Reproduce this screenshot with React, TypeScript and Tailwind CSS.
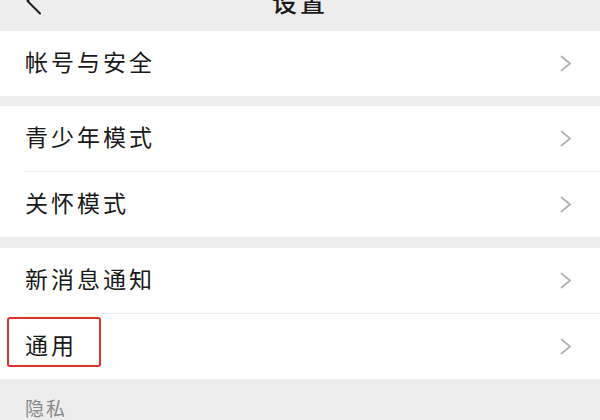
import React from 'react'

const font = { fontFamily: '"Noto Sans CJK SC", "Noto Sans", sans-serif' }

function Chevron() {
  return (
    <svg width="12" height="17" viewBox="0 0 12 17" className="shrink-0">
      <path d="M1.5 1.5 L10 8.5 L1.5 15.5" fill="none" stroke="#b2b2b2" strokeWidth="1.8" strokeLinecap="round" strokeLinejoin="round" />
    </svg>
  )
}

function Row({ label, tall, divider, boxed }: { label: string; tall?: boolean; divider?: boolean; boxed?: boolean }) {
  return (
    <div className={`relative flex items-center pl-[25px] pr-[28px] ${tall ? 'h-[66px]' : 'h-[65px]'}`}>
      {divider && <div className="absolute top-0 left-[24px] right-0 h-px bg-[#ececec]" />}
      {boxed && (
        <div className="absolute left-[7px] top-[4px] w-[94px] h-[50px] border-2 border-[#e0322b] rounded-[3px]" />
      )}
      <span className="flex-1 -translate-y-[2px] text-[23px] leading-none tracking-[3px] text-[#191919]">{label}</span>
      <Chevron />
    </div>
  )
}

export default function App() {
  return (
    <div className="w-[600px] h-[420px] overflow-hidden bg-[#ededed]" style={font}>
      {/* header, cut off at the top */}
      <div className="relative h-[31px] overflow-hidden bg-[#ededed]">
        <div className="-mt-[30px] h-[62px] flex items-center justify-center">
          <span className="text-[25px] leading-none font-medium tracking-[3px] text-[#191919]">设置</span>
        </div>
        <svg className="absolute left-[25px] top-0" width="18" height="16" viewBox="0 0 18 16">
          <path d="M15 -11 L2.5 1 L15 13.5" fill="none" stroke="#1c1c1c" strokeWidth="2" strokeLinecap="round" strokeLinejoin="round" />
        </svg>
      </div>

      <div className="bg-white">
        <Row label="帐号与安全" />
      </div>

      <div className="mt-[10px] bg-white">
        <Row label="青少年模式" />
        <Row label="关怀模式" tall divider />
      </div>

      <div className="mt-[11px] bg-white">
        <Row label="新消息通知" />
        <Row label="通用" tall divider boxed />
      </div>

      <div className="pl-[25px] pt-[19px] text-[19px] leading-none tracking-[2px] text-[#8a8a8a]">隐私</div>
    </div>
  )
}
